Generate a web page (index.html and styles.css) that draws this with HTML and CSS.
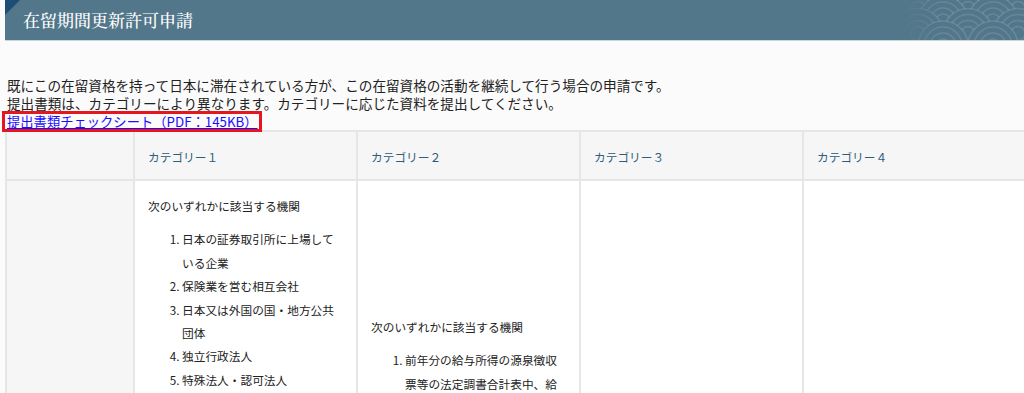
FILE: index.html
```html
<!DOCTYPE html>
<html lang="ja">
<head>
    <meta charset="UTF-8">
    <title>在留期間更新許可申請</title>
    <link rel="stylesheet" href="styles.css">
</head>
<body>
    <div class="page">
        <header class="page-head">
            <h1 class="page-title">在留期間更新許可申請</h1>
            <!-- 右上の青海波 -->
            <svg class="wave" width="120" height="40" viewBox="0 0 120 40" aria-hidden="true">
                <defs>
                    <g id="scale">
                        <circle r="25" fill="#53778a"/>
                        <circle r="19" fill="none"/>
                        <circle r="13" fill="none"/>
                        <circle r="7" fill="none"/>
                    </g>
                    <linearGradient id="fade" x1="0" x2="1" y1="0" y2="0">
                        <stop offset="0" stop-color="#fff" stop-opacity="0"/>
                        <stop offset="0.3" stop-color="#fff" stop-opacity="1"/>
                    </linearGradient>
                    <mask id="fade-mask">
                        <rect width="120" height="40" fill="url(#fade)"/>
                    </mask>
                </defs>
                <g class="scales" mask="url(#fade-mask)">
                    <use href="#scale" x="39" y="-4"/>
                    <use href="#scale" x="89" y="-4"/>
                    <use href="#scale" x="14" y="8.5"/>
                    <use href="#scale" x="64" y="8.5"/>
                    <use href="#scale" x="114" y="8.5"/>
                    <use href="#scale" x="39" y="21"/>
                    <use href="#scale" x="89" y="21"/>
                    <use href="#scale" x="14" y="33.5"/>
                    <use href="#scale" x="64" y="33.5"/>
                    <use href="#scale" x="114" y="33.5"/>
                    <use href="#scale" x="39" y="46"/>
                    <use href="#scale" x="89" y="46"/>
                </g>
            </svg>
        </header>

        <main class="content">
            <p class="lead">
                既にこの在留資格を持って日本に滞在されている方が、この在留資格の活動を継続して行う場合の申請です。<br>
                提出書類は、カテゴリーにより異なります。カテゴリーに応じた資料を提出してください。
            </p>
            <div class="checksheet">
                <a href="#" class="checksheet-link">提出書類チェックシート（PDF：145KB）</a>
            </div>

            <table class="cat-table">
                <colgroup>
                    <col class="col-head">
                    <col class="col-cat">
                    <col class="col-cat">
                    <col class="col-cat">
                    <col class="col-cat">
                </colgroup>
                <thead>
                    <tr>
                        <th></th>
                        <th>カテゴリー１</th>
                        <th>カテゴリー２</th>
                        <th>カテゴリー３</th>
                        <th>カテゴリー４</th>
                    </tr>
                </thead>
                <tbody>
                    <tr>
                        <th></th>
                        <td>
                            <p class="cell-lead">次のいずれかに該当する機関</p>
                            <ol class="cell-list">
                                <li>日本の証券取引所に上場している企業</li>
                                <li>保険業を営む相互会社</li>
                                <li>日本又は外国の国・地方公共団体</li>
                                <li>独立行政法人</li>
                                <li>特殊法人・認可法人</li>
                                <li>日本の国・地方公共団体認可の公益法人</li>
                                <li>法人税法別表第１に掲げる公共法人</li>
                                <li>高度専門職省令第１条第１項各号の表の特別加算の項の中欄イ又はロの対象企業（イノベーション創出企業）</li>
                                <li>一定の条件を満たす企業等</li>
                            </ol>
                            <p class="cell-note">※対象はリンク先の「イノベーション促進支援措置一覧」を御確認ください。</p>
                        </td>
                        <td>
                            <p class="cell-lead">次のいずれかに該当する機関</p>
                            <ol class="cell-list">
                                <li>前年分の給与所得の源泉徴収票等の法定調書合計表中、給与所得の源泉徴収合計表の源泉徴収税額が1,000万円以上ある団体・個人</li>
                                <li>在留申請オンラインシステムの利用申出の承認を受けている機関（カテゴリー１及び４の機関を除く）</li>
                            </ol>
                        </td>
                        <td>
                            <p class="cell-text">前年分の職員の給与所得の源泉徴収票等の法定調書合計表が提出された団体・個人（カテゴリー２を除く）</p>
                        </td>
                        <td>
                            <p class="cell-text">左のいずれにも該当しない団体・個人</p>
                        </td>
                    </tr>
                </tbody>
            </table>
        </main>
    </div>
</body>
</html>
```

FILE: styles.css
```css
* {
    margin: 0;
    padding: 0;
    box-sizing: border-box;
}

body {
    width: 1024px;
    background: #fbfbfb;
    font-family: "Noto Sans CJK JP", "Noto Sans", sans-serif;
    color: #222;
    overflow: hidden;
}

.page {
    padding-left: 5px;
}

/* 見出しバー */
.page-head {
    position: relative;
    height: 41px;
    background: #53778a;
    border-bottom: 1px solid #c9d7de;
    padding-left: 18px;
    display: flex;
    align-items: center;
    overflow: hidden;
}

.page-head::before {
    content: "";
    position: absolute;
    top: 0;
    left: 0;
    border-top: 15px solid #1d4f74;
    border-right: 15px solid transparent;
}

.page-title {
    font-family: "Noto Serif CJK JP", "Noto Sans CJK JP", serif;
    font-size: 17px;
    font-weight: 500;
    color: #fff;
    margin-top: -2px;
}

.wave {
    position: absolute;
    top: 0;
    right: 0;
}

.wave .scales {
    stroke: rgba(255, 255, 255, 0.12);
    stroke-width: 1.6;
}

/* 本文 */
.content {
    padding: 35px 0 0 2px;
}

.lead {
    font-size: 13.6px;
    line-height: 18px;
}

.checksheet {
    height: 18px;
    font-size: 13.3px;
    line-height: 15px;
}

.checksheet-link {
    display: inline-block;
    vertical-align: top;
    margin: -1px 0 0 -5px;
    padding: 0 1px 0 2px;
    border: 3px solid #e5161d;
    color: #1a0dff;
    text-decoration: underline;
}

/* カテゴリー表 */
.cat-table {
    width: 1020px;
    margin-left: -2px;
    table-layout: fixed;
    border-collapse: collapse;
    font-size: 11.7px;
}

.col-head { width: 128px; }
.col-cat { width: 223px; }

.cat-table th,
.cat-table td {
    border: 2px solid #e6e6e6;
    text-align: left;
    vertical-align: middle;
    padding: 13px 13px;
    font-weight: normal;
}

.cat-table thead th {
    background: #f6f6f6;
    color: #2c5d7a;
    height: 49px;
    padding-top: 15px;
    padding-bottom: 13px;
}

.cat-table tbody th {
    background: #f6f6f6;
}

.cat-table td {
    background: #fff;
}

.cell-lead,
.cell-text,
.cell-note {
    line-height: 23.4px;
}

.cell-list {
    margin-top: 10px;
    padding-left: 34px;
    line-height: 23.4px;
}

.cell-note {
    margin-top: 8px;
}
```
